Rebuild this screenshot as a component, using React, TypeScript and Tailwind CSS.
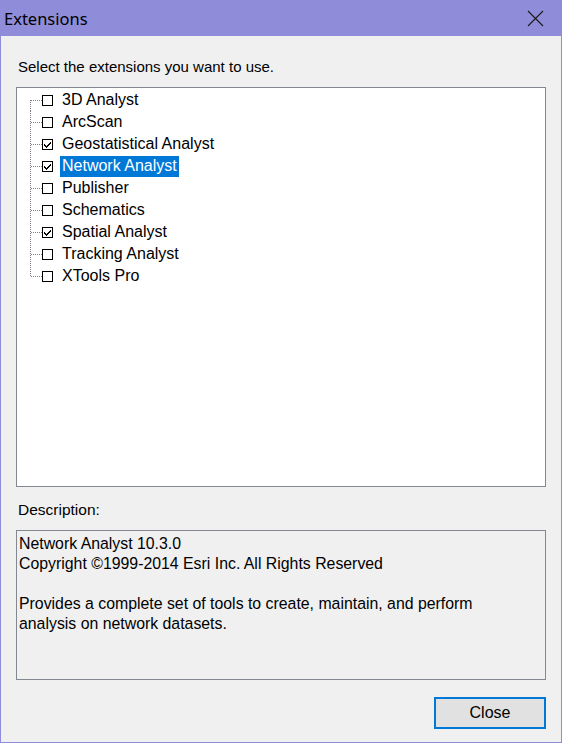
import React from 'react';

const items = [
  { name: '3D Analyst', checked: false },
  { name: 'ArcScan', checked: false },
  { name: 'Geostatistical Analyst', checked: true },
  { name: 'Network Analyst', checked: true, selected: true },
  { name: 'Publisher', checked: false },
  { name: 'Schematics', checked: false },
  { name: 'Spatial Analyst', checked: true },
  { name: 'Tracking Analyst', checked: false },
  { name: 'XTools Pro', checked: false },
];

function TreeLines({ first, last }: { first: boolean; last: boolean }) {
  return (
    <svg width="25" height="22" className="shrink-0" shapeRendering="crispEdges">
      <line
        x1="13.5"
        x2="13.5"
        y1={first ? 11 : 0}
        y2={last ? 12 : 22}
        stroke="#808080"
        strokeDasharray="1 1"
      />
      <line x1="14" x2="25" y1="11.5" y2="11.5" stroke="#808080" strokeDasharray="1 1" />
    </svg>
  );
}

function Check({ checked }: { checked: boolean }) {
  return (
    <span className="flex h-[11px] w-[11px] shrink-0 items-center justify-center border border-black bg-white">
      {checked ? (
        <svg width="9" height="9" viewBox="0 0 9 9" shapeRendering="crispEdges">
          <path d="M1 4h1v1h1v1h1V5h1V4h1V3h1V2h1v2H7v1H6v1H5v1H4v1H3V7H2V6H1z" fill="#000" />
        </svg>
      ) : null}
    </span>
  );
}

export default function App() {
  return (
    <div
      className="flex h-[743px] w-[562px] flex-col bg-[#f0f0f0] text-black"
      style={{ fontFamily: '"Liberation Sans", Arial, sans-serif' }}
    >
      <div className="flex h-[36px] shrink-0 items-center justify-between bg-[#8f8cd9] pl-[4px] pr-[18px] pt-[3px]">
        <span className="text-[16.5px]" style={{ fontFamily: '"Noto Sans", "Open Sans", sans-serif' }}>
          Extensions
        </span>
        <svg width="17" height="17" viewBox="0 0 17 17" className="-mt-[3px]">
          <path d="M1 1L16 16M16 1L1 16" stroke="#1a1a1a" strokeWidth="1.1" />
        </svg>
      </div>

      <div className="flex flex-1 flex-col border-x border-b border-[#8f8cd9] px-[15px] pt-[21px]">
        <p className="pl-[2px] text-[15px] leading-[20px]">Select the extensions you want to use.</p>

        <ul className="mt-[10px] h-[400px] w-[530px] border border-[#828790] bg-white pt-[1px]">
          {items.map((it, i) => (
            <li key={it.name} className="flex h-[22px] items-center text-[16px]">
              <TreeLines first={i === 0} last={i === items.length - 1} />
              <Check checked={it.checked} />
              <span
                className={
                  it.selected
                    ? 'ml-[7px] flex h-[21px] items-center bg-[#0078d7] px-[2px] text-white'
                    : 'ml-[7px] flex h-[21px] items-center px-[2px]'
                }
              >
                {it.name}
              </span>
            </li>
          ))}
        </ul>

        <p className="mt-[13px] pl-[2px] text-[15.5px] leading-[20px]">Description:</p>

        <div className="mt-[10px] h-[150px] w-[530px] border border-[#828790] pl-[2px] pt-[3px] text-[15.85px] leading-[20px]">
          <p>Network Analyst 10.3.0</p>
          <p>Copyright ©1999-2014 Esri Inc. All Rights Reserved</p>
          <p>&nbsp;</p>
          <p>Provides a complete set of tools to create, maintain, and perform</p>
          <p>analysis on network datasets.</p>
        </div>

        <div className="mt-[17px] flex justify-end">
          <button className="h-[32px] w-[112px] border-2 border-[#0078d7] bg-[#e1e1e1] text-[16px]">Close</button>
        </div>
      </div>
    </div>
  );
}
